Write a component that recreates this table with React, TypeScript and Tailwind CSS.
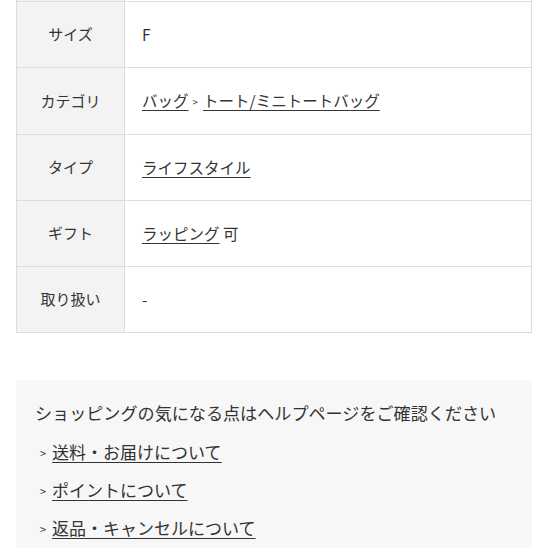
const rows: { label: string; value: React.ReactNode; h: string }[] = [
  { label: "サイズ", value: <span>F</span>, h: "h-[66px]" },
  {
    label: "カテゴリ",
    value: (
      <span>
        <a className="underline underline-offset-[3px]">バッグ</a>
        <span className="text-[10px] ml-[4px] mr-[5px] align-[1px]">&gt;</span>
        <a className="underline underline-offset-[3px]">トート/ミニトートバッグ</a>
      </span>
    ),
    h: "h-[67px]",
  },
  { label: "タイプ", value: <a className="underline underline-offset-[3px]">ライフスタイル</a>, h: "h-[66px]" },
  {
    label: "ギフト",
    value: (
      <span>
        <a className="underline underline-offset-[3px]">ラッピング</a> 可
      </span>
    ),
    h: "h-[66px]",
  },
  { label: "取り扱い", value: <span>-</span>, h: "h-[66px]" },
];

const helpLinks = ["送料・お届けについて", "ポイントについて", "返品・キャンセルについて"];

export default function App() {
  return (
    <div
      className="w-[548px] h-[548px] overflow-hidden bg-white text-[#333]"
      style={{ fontFamily: '"Noto Sans CJK JP", "Noto Sans", sans-serif' }}
    >
      {/* spec table, first visible row starts just below the top edge */}
      <div className="mx-[16px] border-x border-[#dcdcdc]">
        <div className="flex h-px">
          <div className="w-[108px] bg-[#f3f3f3] border-r border-[#dcdcdc]" />
          <div className="flex-1" />
        </div>
        {rows.map((row) => (
          <div key={row.label} className={`flex ${row.h} border-t border-[#dcdcdc]`}>
            <div className="w-[108px] shrink-0 bg-[#f3f3f3] border-r border-[#dcdcdc] flex items-center justify-center text-[15px]">
              {row.label}
            </div>
            <div className="flex-1 flex items-center pl-[17px] text-[15.5px]">{row.value}</div>
          </div>
        ))}
        <div className="border-t border-[#dcdcdc]" />
      </div>

      {/* help box */}
      <div className="mx-[16px] mt-[47px] bg-[#f7f7f7] pt-[20px] pl-[19px] h-[200px]">
        <p className="text-[17.1px] leading-[26px]">ショッピングの気になる点はヘルプページをご確認ください</p>
        <ul className="mt-[13px] flex flex-col gap-[12px]">
          {helpLinks.map((t) => (
            <li key={t} className="flex items-center text-[17px] leading-[26px]">
              <span className="text-[11px] ml-[5px] mr-[6px] translate-y-[1px]">&gt;</span>
              <a className="underline underline-offset-[3px]">{t}</a>
            </li>
          ))}
        </ul>
      </div>
    </div>
  );
}
